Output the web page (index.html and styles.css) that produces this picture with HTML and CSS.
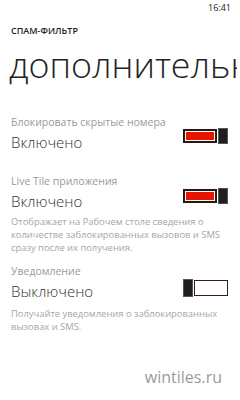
FILE: index.html
```html
<!DOCTYPE html>
<html lang="ru">
<head>
<meta charset="utf-8">
<link rel="stylesheet" href="styles.css">
</head>
<body>
<div class="screen">
  <div class="status"><span class="time">16:41</span></div>
  <div class="app-title">СПАМ-ФИЛЬТР</div>
  <div class="page-title">дополнительно</div>

  <div class="setting s1">
    <div class="label">Блокировать скрытые номера</div>
    <div class="row">
      <span class="value">Включено</span>
      <span class="toggle on t1"><span class="track"><span class="fill"></span></span><span class="thumb"></span></span>
    </div>
  </div>

  <div class="setting s2">
    <div class="label">Live Tile приложения</div>
    <div class="row">
      <span class="value">Включено</span>
      <span class="toggle on t2"><span class="track"><span class="fill"></span></span><span class="thumb"></span></span>
    </div>
    <div class="desc d1">Отображает на Рабочем столе сведения о количестве заблокированных вызовов и SMS сразу после их получения.</div>
  </div>

  <div class="setting s3">
    <div class="label">Уведомление</div>
    <div class="row">
      <span class="value">Выключено</span>
      <span class="toggle off t3"><span class="thumb"></span><span class="track"></span></span>
    </div>
    <div class="desc d2">Получайте уведомления о заблокированных вызовах и SMS.</div>
  </div>

  <div class="watermark">wintiles.ru</div>
</div>
</body>
</html>
```

FILE: styles.css
```css
html, body {
  margin: 0;
  padding: 0;
  background: #ffffff;
}
body {
  width: 240px;
  height: 400px;
  overflow: hidden;
  font-family: "Open Sans", "Noto Sans", sans-serif;
}
.screen {
  display: flex;
  flex-direction: column;
  width: 240px;
  height: 400px;
  overflow: hidden;
}
.status {
  display: flex;
  justify-content: flex-end;
  height: 16px;
  padding-right: 9px;
}
.time {
  font-size: 9px;
  line-height: 16px;
  color: #222;
}
.app-title {
  margin-top: 9px;
  padding-left: 11px;
  font-size: 9px;
  font-weight: 600;
  line-height: 12px;
  color: #1e1e1e;
}
.page-title {
  margin-top: 5px;
  margin-right: 3px;
  padding-left: 9px;
  font-size: 35.8px;
  font-weight: 300;
  line-height: 44px;
  color: #222;
  white-space: nowrap;
  overflow: hidden;
}
.setting {
  padding-left: 11px;
  padding-right: 12px;
}
.s1 { margin-top: 29px; }
.s2 { margin-top: 20px; }
.s3 { margin-top: 10px; }
.label {
  font-size: 10.5px;
  line-height: 14px;
  color: #9a9a9a;
}
.row {
  display: flex;
  align-items: flex-start;
  justify-content: space-between;
  height: 24px;
  margin-top: 1px;
}
.value {
  font-size: 15px;
  font-weight: 300;
  color: #333;
  line-height: 22px;
  margin-top: 1px;
}
.toggle {
  display: flex;
  align-items: center;
  gap: 1px;
}
.t1 { margin-top: -2px; }
.t2 { margin-top: -1px; }
.t3 { margin-top: 0; }
.track {
  display: block;
  box-sizing: border-box;
  width: 34px;
  height: 14px;
  border: 2px solid #2a1414;
  padding: 1px;
  background: #fff;
}
.fill {
  display: block;
  width: 100%;
  height: 100%;
  background: #e51400;
}
.thumb {
  display: block;
  box-sizing: border-box;
  width: 10px;
  height: 16px;
  background: #1f1f1f;
  border: 1px solid #555;
}
.off .track {
  width: 34px;
  height: 16px;
  border: 1.5px solid #3a1a1a;
}
.off .thumb {
  height: 18px;
}
.setting .desc {
  font-size: 9.4px;
  line-height: 13px;
  color: #a6a6a6;
  margin-right: -6px;
}
.d1 { margin-top: 2px; }
.d2 { margin-top: 4px; }
.watermark {
  margin-top: auto;
  margin-bottom: 13px;
  align-self: flex-end;
  padding-right: 18px;
  font-size: 16px;
  line-height: 20px;
  color: #9b9b9b;
}
```
